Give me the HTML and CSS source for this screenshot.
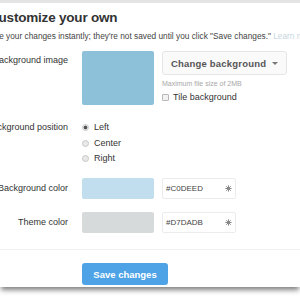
FILE: index.html
```html
<!DOCTYPE html>
<html lang="en">
<head>
    <meta charset="UTF-8">
    <title>Customize your own</title>
    <link rel="stylesheet" href="styles.css">
</head>
<body>
    <div class="sheet">
        <div class="page">
            <h2 class="title">Customize your own</h2>
            <p class="intro">See your changes instantly; they're not saved until you click "Save changes." <a href="#">Learn more</a></p>

            <!-- Background image -->
            <div class="row row-image">
                <label class="label"><span>Background image</span></label>
                <div class="controls">
                    <div class="preview"></div>
                    <div class="upload">
                        <button class="btn">Change background <span class="caret"></span></button>
                        <p class="hint">Maximum file size of 2MB</p>
                        <label class="check"><input type="checkbox"> Tile background</label>
                    </div>
                </div>
            </div>

            <!-- Background position -->
            <div class="row row-position">
                <label class="label"><span>Background position</span></label>
                <div class="radios">
                    <label class="radio"><input type="radio" name="pos" checked> Left</label>
                    <label class="radio"><input type="radio" name="pos"> Center</label>
                    <label class="radio"><input type="radio" name="pos"> Right</label>
                </div>
            </div>

            <!-- Colors -->
            <div class="row row-color">
                <label class="label"><span>Background color</span></label>
                <div class="controls">
                    <div class="swatch bg-swatch"></div>
                    <div class="hex">
                        <span>#C0DEED</span>
                        <svg class="picker" viewBox="0 0 10 10"><path d="M5 0.5V9.5M0.5 5H9.5M1.8 1.8L8.2 8.2M8.2 1.8L1.8 8.2" /><circle cx="5" cy="5" r="2" /></svg>
                    </div>
                </div>
            </div>
            <div class="row row-color">
                <label class="label"><span>Theme color</span></label>
                <div class="controls">
                    <div class="swatch theme-swatch"></div>
                    <div class="hex">
                        <span>#D7DADB</span>
                        <svg class="picker" viewBox="0 0 10 10"><path d="M5 0.5V9.5M0.5 5H9.5M1.8 1.8L8.2 8.2M8.2 1.8L1.8 8.2" /><circle cx="5" cy="5" r="2" /></svg>
                    </div>
                </div>
            </div>

            <div class="actions">
                <button class="btn-primary">Save changes</button>
            </div>
        </div>
    </div>
</body>
</html>
```

FILE: styles.css
```css
body {
    margin: 0;
    width: 300px;
    height: 300px;
    overflow: hidden;
    background: #fff;
    font-family: "Liberation Sans", Arial, sans-serif;
    color: #333;
}
.sheet {
    border-top: 3px solid #e4e4e4;
    height: 284px;
    background: #fff;
    box-shadow: 0 4px 5px -1px rgba(0, 0, 0, 0.5);
    overflow: hidden;
}
.page {
    margin-left: -11px;
    width: 320px;
}
.title {
    margin: 0;
    padding-top: 6px;
    font-size: 13.5px;
    line-height: 17px;
    font-weight: bold;
    letter-spacing: -0.2px;
    color: #333;
}
.intro {
    margin: 5px 0 0;
    font-size: 8.3px;
    line-height: 10px;
    color: #444;
    white-space: nowrap;
}
.intro a {
    color: #c8d6e0;
    text-decoration: none;
}
.row {
    display: flex;
    align-items: flex-start;
}
.label {
    width: 79px;
    flex: none;
    margin-right: 14px;
    display: flex;
    justify-content: flex-end;
    white-space: nowrap;
    font-size: 9px;
    line-height: 11px;
    color: #333;
}
.controls {
    display: flex;
    gap: 8px;
}
.row-image {
    margin-top: 10px;
}
.row-image .label {
    padding-top: 4px;
}
.preview {
    width: 72px;
    height: 54px;
    border-radius: 2px;
    background: #8dc1da;
}
.btn {
    height: 24px;
    width: 125px;
    border: 1px solid #e6e6e6;
    border-radius: 3px;
    background: #fafafa;
    font-family: inherit;
    font-size: 9.5px;
    font-weight: bold;
    color: #555;
    padding: 0;
    letter-spacing: 0.2px;
}
.caret {
    display: inline-block;
    margin-left: 3px;
    vertical-align: middle;
    border-top: 3px solid #777;
    border-left: 3px solid transparent;
    border-right: 3px solid transparent;
}
.hint {
    margin: 4px 0 0;
    font-size: 7px;
    line-height: 9px;
    color: #a8a8a8;
}
.check {
    display: flex;
    align-items: center;
    gap: 4px;
    margin-top: 4px;
    font-size: 9px;
    color: #333;
}
.check input, .radio input {
    appearance: none;
    margin: 0;
    width: 7px;
    height: 7px;
    border: 1px solid #b8b8b8;
    background: #f2f2f2;
    flex: none;
}
.check input {
    border-radius: 1px;
}
.radio input {
    border-radius: 50%;
    border-color: #c8c8c8;
    background: #e8e8e8;
}
.radio input:checked {
    background: radial-gradient(circle, #555 0 1.6px, #ededed 2.2px);
}
.row-position {
    margin-top: 17px;
}
.radios {
    display: flex;
    flex-direction: column;
    gap: 4.5px;
}
.radio {
    display: flex;
    align-items: center;
    gap: 5px;
    font-size: 9px;
    line-height: 11px;
    color: #333;
}
.row-color {
    margin-top: 14px;
}
.row-color + .row-color {
    margin-top: 13px;
}
.row-color .label {
    padding-top: 5px;
}
.swatch {
    width: 72px;
    height: 21px;
    border-radius: 2px;
}
.bg-swatch {
    background: #c0deed;
}
.theme-swatch {
    background: #d7dadb;
}
.hex {
    width: 74px;
    height: 21px;
    box-sizing: border-box;
    border: 1px solid #ececec;
    border-radius: 2px;
    display: flex;
    align-items: center;
    justify-content: space-between;
    padding: 0 3px 0 3px;
    font-size: 8px;
    color: #444;
}
.picker {
    width: 7px;
    height: 7px;
    stroke: #888;
    stroke-width: 1.4;
    fill: #888;
}
.actions {
    margin-top: 16px;
    border-top: 1px solid #f0f0f0;
    padding: 13px 0 0 93px;
}
.btn-primary {
    width: 86px;
    height: 22px;
    border: none;
    border-radius: 3px;
    background: #4da3e6;
    color: #fff;
    font-family: inherit;
    font-size: 9.5px;
    font-weight: bold;
    padding: 0;
}
```
